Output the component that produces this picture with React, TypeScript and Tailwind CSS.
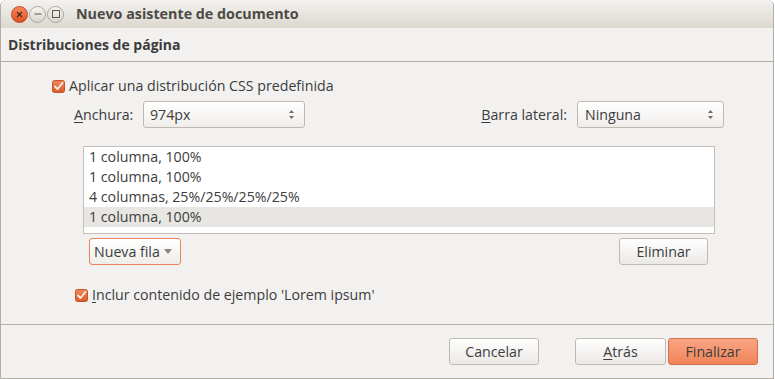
import React from "react";

const F = { fontFamily: '"Open Sans", "Noto Sans", sans-serif' };

function Check() {
  return (
    <svg width="13" height="13" viewBox="0 0 13 13" className="shrink-0">
      <defs>
        <linearGradient id="cbg" x1="0" y1="0" x2="0" y2="1">
          <stop offset="0" stopColor="#f08a5d" />
          <stop offset="1" stopColor="#d9592c" />
        </linearGradient>
      </defs>
      <rect x="0.5" y="0.5" width="12" height="12" rx="2" fill="url(#cbg)" stroke="#c5542b" />
      <path d="M3 6.5 L5.5 9 L10.5 3" fill="none" stroke="#fbeee8" strokeWidth="1.8" strokeLinecap="round" strokeLinejoin="round" />
    </svg>
  );
}

function Spin() {
  return (
    <svg width="7" height="11" viewBox="0 0 7 11" className="shrink-0">
      <path d="M3.5 1 L6 4 L1 4 Z" fill="#6e6a66" />
      <path d="M3.5 10 L6 7 L1 7 Z" fill="#6e6a66" />
    </svg>
  );
}

function WinBtn({ kind }: { kind: "close" | "min" | "max" }) {
  if (kind === "close") {
    return (
      <div className="w-[17px] h-[17px] rounded-full bg-gradient-to-b from-[#f7875b] to-[#e0501f] border border-[#b84a25] flex items-center justify-center">
        <svg width="7" height="7" viewBox="0 0 7 7">
          <path d="M1 1 L6 6 M6 1 L1 6" stroke="#4a2a1e" strokeWidth="1.3" />
        </svg>
      </div>
    );
  }
  return (
    <div className="w-[17px] h-[17px] rounded-full bg-gradient-to-b from-[#f7f6f3] to-[#d9d5ce] border border-[#aba59c] flex items-center justify-center">
      {kind === "min" ? (
        <svg width="8" height="8" viewBox="0 0 8 8">
          <path d="M0.5 4 L7.5 4" stroke="#5b5853" strokeWidth="1" />
        </svg>
      ) : (
        <svg width="8" height="8" viewBox="0 0 8 8">
          <rect x="0.5" y="0.5" width="7" height="7" fill="none" stroke="#5b5853" strokeWidth="1" />
        </svg>
      )}
    </div>
  );
}

function Btn({ children, w, primary }: { children: React.ReactNode; w: string; primary?: boolean }) {
  return (
    <div
      className={
        "h-[27px] rounded-[3px] border flex items-center justify-center text-[14.2px] text-[#3c3c3c] " +
        w +
        (primary
          ? " bg-gradient-to-b from-[#f9a484] to-[#f08459] border-[#d0714c]"
          : " bg-gradient-to-b from-[#ffffff] to-[#ebe9e6] border-[#c0b9b1]")
      }
    >
      {children}
    </div>
  );
}

export default function App() {
  const rows = [
    "1 columna, 100%",
    "1 columna, 100%",
    "4 columnas, 25%/25%/25%/25%",
    "1 columna, 100%",
  ];
  return (
    <div style={F} className="w-[774px] h-[379px] bg-[#f2f1f0] border-x border-b border-[#b5aca2] rounded-t-[6px] overflow-hidden flex flex-col text-[#3c3c3c]">
      {/* title bar */}
      <div className="h-[28px] shrink-0 bg-gradient-to-b from-[#f3f2ef] to-[#dcd8d0] flex items-center">
        <div className="ml-[10px] flex items-center gap-[1px]">
          <WinBtn kind="close" />
          <WinBtn kind="min" />
          <WinBtn kind="max" />
        </div>
        <div className="ml-[12px] text-[14.3px] font-bold text-[#4d4a45]">Nuevo asistente de documento</div>
      </div>
      {/* header */}
      <div className="h-[34px] shrink-0 border-b border-[#b7afa6] flex items-center pl-[7px]">
        <div className="text-[14px] font-bold text-[#3c3c3c]">Distribuciones de página</div>
      </div>
      {/* content */}
      <div className="h-[263px] shrink-0 border-b border-[#b7afa6] flex flex-col pt-[14px] text-[14.2px]">
        <div className="h-[20px] flex items-center ml-[51px] gap-[4px]">
          <Check />
          <span>Aplicar una distribución CSS predefinida</span>
        </div>
        <div className="mt-[5px] h-[27px] flex items-center">
          <span className="ml-[73px] w-[69px]">
            <span className="underline underline-offset-2">A</span>nchura:
          </span>
          <div className="w-[162px] h-[27px] rounded-[3px] border border-[#c0b9b1] bg-gradient-to-b from-[#ffffff] to-[#f0eeeb] flex items-center justify-between pl-[6px] pr-[9px]">
            <span>974px</span>
            <Spin />
          </div>
          <span className="ml-auto mr-[10px]">
            <span className="underline underline-offset-2">B</span>arra lateral:
          </span>
          <div className="w-[147px] h-[27px] mr-[49px] rounded-[3px] border border-[#c0b9b1] bg-gradient-to-b from-[#ffffff] to-[#f0eeeb] flex items-center justify-between pl-[7px] pr-[9px]">
            <span>Ninguna</span>
            <Spin />
          </div>
        </div>
        <div className="mt-[18px] ml-[82px] w-[632px] h-[88px] border border-[#c6beb6] bg-white flex flex-col">
          {rows.map((r, i) => (
            <div key={i} className={"h-[20px] flex items-center pl-[5px] " + (i === 3 ? "bg-[#e8e6e2]" : "")}>
              {r}
            </div>
          ))}
        </div>
        <div className="mt-[4px] flex items-center">
          <div className="ml-[88px] w-[92px] h-[27px] rounded-[3px] border border-[#e8835b] bg-gradient-to-b from-[#ffffff] to-[#efedea] flex items-center pl-[4px] gap-[4px]">
            <span>Nueva fila</span>
            <svg width="8" height="5" viewBox="0 0 8 5">
              <path d="M0 0 L8 0 L4 5 Z" fill="#8a8681" />
            </svg>
          </div>
          <div className="ml-auto mr-[65px]">
            <Btn w="w-[89px]">Eliminar</Btn>
          </div>
        </div>
        <div className="mt-[20px] h-[20px] flex items-center ml-[74px] gap-[4px]">
          <Check />
          <span>
            <span className="underline underline-offset-2">I</span>nclur contenido de ejemplo 'Lorem ipsum'
          </span>
        </div>
      </div>
      {/* footer */}
      <div className="flex-1 flex items-start pt-[13px]">
        <div className="ml-[448px]">
          <Btn w="w-[90px]">Cancelar</Btn>
        </div>
        <div className="ml-[36px]">
          <Btn w="w-[91px]">
            <span>
              <span className="underline underline-offset-2">A</span>trás
            </span>
          </Btn>
        </div>
        <div className="ml-[2px]">
          <Btn w="w-[90px]" primary>
            Finalizar
          </Btn>
        </div>
      </div>
    </div>
  );
}
